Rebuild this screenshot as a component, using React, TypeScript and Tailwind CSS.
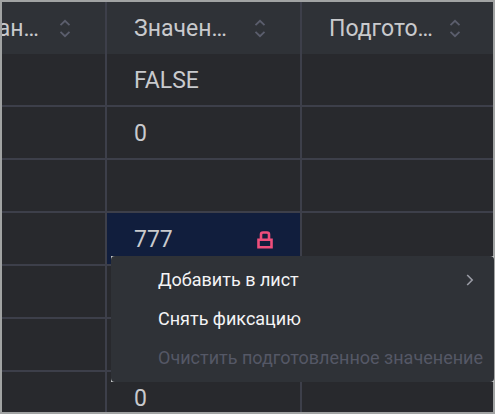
import { useState } from 'react';
import clsx from 'clsx';

type Row = {
  value: string;
  locked?: boolean;
};

const columns = [
  { id: 'name', title: 'ан…' },
  { id: 'value', title: 'Значен…' },
  { id: 'prepared', title: 'Подгото…' },
];

const rows: Row[] = [
  { value: 'FALSE' },
  { value: '0' },
  { value: '' },
  { value: '777', locked: true },
  { value: '' },
  { value: '' },
  { value: '0' },
];

const menuItems = [
  { label: 'Добавить в лист', submenu: true },
  { label: 'Снять фиксацию' },
  { label: 'Очистить подготовленное значенение', disabled: true },
];

function SortIcon() {
  return (
    <svg width="12" height="20" viewBox="0 0 12 20" fill="none" stroke="currentColor" strokeWidth="1.8">
      <path d="M1.5 6.2 6 1.8l4.5 4.4M1.5 12.8 6 17.2l4.5-4.4" />
    </svg>
  );
}

function LockIcon() {
  return (
    <svg width="16" height="18" viewBox="0 0 16 18" fill="none" stroke="currentColor" strokeWidth="2.6">
      <path d="M1.5 8.7h13v7.6h-13zM4 8.7V3.4Q4 1.5 6 1.5h4q2 0 2 1.9v5.3" />
    </svg>
  );
}

export default function App() {
  const [selected, setSelected] = useState(3);

  return (
    <main className="relative h-screen border-2 border-[#a1a3a3] bg-[#28292d] font-['Roboto','Noto_Sans',sans-serif] text-[#c9cacd]">
      <div className="h-full overflow-hidden">
        <table className="w-[calc(100%+4px)] table-fixed border-separate border-spacing-0 text-[23px] leading-7">
          <colgroup>
            <col className="w-[105px]" />
            <col className="w-[195px]" />
            <col />
          </colgroup>
          <thead>
            <tr className="h-[52px] bg-[#2f3237]">
              {columns.map((column, i) => (
                <th key={column.id} className="border-r-2 border-[#3d3f4a] p-0 pt-0.5 font-normal">
                  <div
                    className={clsx(
                      'flex items-center pr-[34px]',
                      i === 0 ? 'justify-end gap-5' : 'justify-between pl-[27px]',
                    )}
                  >
                    <span className="whitespace-nowrap">{column.title}</span>
                    <button type="button" aria-label="Сортировать" className="text-[#5b5e6d]">
                      <SortIcon />
                    </button>
                  </div>
                </th>
              ))}
            </tr>
          </thead>
          <tbody>
            {rows.map((row, i) => (
              <tr key={i} className="h-[53px]">
                <td className="border-r-2 border-b-2 border-[#3d3f4a] p-0" />
                <td
                  onClick={() => setSelected(i)}
                  className={clsx(
                    'border-r-2 border-b-2 border-[#3d3f4a] p-0 pt-0.5',
                    selected === i && 'bg-[#111e3d]',
                  )}
                >
                  <div className="flex items-center justify-between pr-[27px] pl-[27px]">
                    <span>{row.value}</span>
                    {row.locked && (
                      <span className="text-[#ee4e7b]">
                        <LockIcon />
                      </span>
                    )}
                  </div>
                </td>
                <td className="border-r-2 border-b-2 border-[#3d3f4a] p-0" />
              </tr>
            ))}
          </tbody>
        </table>
      </div>

      <div className="absolute top-[254px] -right-px left-[109px] bg-[#c4c6c7]">
        <div role="menu" className="rounded bg-[#2f3237] pt-1 pb-[5px]">
          {menuItems.map(item => (
            <button
              key={item.label}
              type="button"
              role="menuitem"
              disabled={item.disabled}
              className="flex h-[39px] w-full items-center justify-between pr-5 pl-[47px] text-lg whitespace-nowrap text-[#f4f4f5] disabled:text-[#555866]"
            >
              {item.label}
              {item.submenu && (
                <svg width="8" height="12" viewBox="0 0 8 12" fill="none" stroke="#9a9ca5" strokeWidth="1.6">
                  <path d="M1.2 1 6.2 6l-5 5" />
                </svg>
              )}
            </button>
          ))}
        </div>
      </div>
    </main>
  );
}
